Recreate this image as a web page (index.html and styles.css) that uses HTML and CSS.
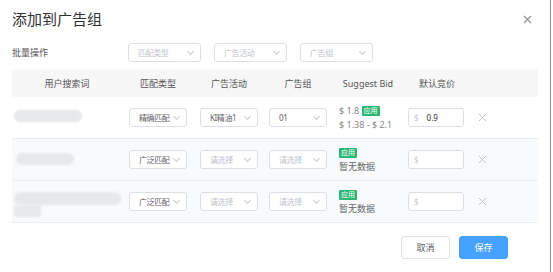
FILE: index.html
```html
<!DOCTYPE html>
<html lang="zh-CN">
<head>
  <meta charset="UTF-8">
  <title>添加到广告组</title>
  <link rel="stylesheet" href="styles.css">
</head>
<body>

  <div class="dialog">
    <div class="dialog-header">
      <span class="dialog-title">添加到广告组</span>
      <svg class="dialog-close" width="9" height="9" viewBox="0 0 9 9"><path d="M1 1L8 8M8 1L1 8" stroke="#909399" stroke-width="1.2"/></svg>
    </div>

    <div class="batch-row">
      <span class="batch-label">批量操作</span>
      <div class="select batch-select placeholder">匹配类型<i class="arrow"></i></div>
      <div class="select batch-select placeholder">广告活动<i class="arrow"></i></div>
      <div class="select batch-select placeholder">广告组<i class="arrow"></i></div>
    </div>

    <div class="grid">
      <div class="row head">
        <div class="cell first"><span>用户搜索词</span></div>
        <div class="cell"><span class="head-text">匹配类型</span></div>
        <div class="cell"><span class="head-text">广告活动</span></div>
        <div class="cell"><span class="head-text">广告组</span></div>
        <div class="cell"><span class="head-text">Suggest Bid</span></div>
        <div class="cell"><span class="head-text">默认竞价</span></div>
        <div class="cell"></div>
      </div>

      <div class="row">
        <div class="cell first"><div class="blur blur-a"></div></div>
        <div class="cell"><div class="select">精确匹配<i class="arrow"></i></div></div>
        <div class="cell"><div class="select">KI精油1<i class="arrow"></i></div></div>
        <div class="cell"><div class="select">01<i class="arrow"></i></div></div>
        <div class="cell bid">
          <div>$ 1.8 <span class="tag">应用</span></div>
          <div>$ 1.38 - $ 2.1</div>
        </div>
        <div class="cell"><div class="price"><span class="currency">$</span>0.9</div></div>
        <div class="cell"><svg class="remove" width="9" height="9" viewBox="0 0 9 9"><path d="M1 1L8 8M8 1L1 8" stroke="#c0c4cc" stroke-width="1"/></svg></div>
      </div>

      <div class="row shaded">
        <div class="cell first"><div class="blur blur-b"></div></div>
        <div class="cell"><div class="select">广泛匹配<i class="arrow"></i></div></div>
        <div class="cell"><div class="select placeholder">请选择<i class="arrow"></i></div></div>
        <div class="cell"><div class="select placeholder">请选择<i class="arrow"></i></div></div>
        <div class="cell bid">
          <div><span class="tag">应用</span></div>
          <div class="empty">暂无数据</div>
        </div>
        <div class="cell"><div class="price"><span class="currency">$</span></div></div>
        <div class="cell"><svg class="remove" width="9" height="9" viewBox="0 0 9 9"><path d="M1 1L8 8M8 1L1 8" stroke="#c0c4cc" stroke-width="1"/></svg></div>
      </div>

      <div class="row shaded">
        <div class="cell first">
          <div class="blur-stack">
            <div class="blur blur-c"></div>
            <div class="blur blur-d"></div>
          </div>
        </div>
        <div class="cell"><div class="select">广泛匹配<i class="arrow"></i></div></div>
        <div class="cell"><div class="select placeholder">请选择<i class="arrow"></i></div></div>
        <div class="cell"><div class="select placeholder">请选择<i class="arrow"></i></div></div>
        <div class="cell bid">
          <div><span class="tag">应用</span></div>
          <div class="empty">暂无数据</div>
        </div>
        <div class="cell"><div class="price"><span class="currency">$</span></div></div>
        <div class="cell"><svg class="remove" width="9" height="9" viewBox="0 0 9 9"><path d="M1 1L8 8M8 1L1 8" stroke="#c0c4cc" stroke-width="1"/></svg></div>
      </div>
    </div>

    <div class="dialog-footer">
      <button class="btn">取消</button>
      <button class="btn primary">保存</button>
    </div>
  </div>

</body>
</html>
```

FILE: styles.css
```css
body {
  margin: 0;
  padding: 0;
  background: #fff;
  font-family: "Noto Sans", "Noto Sans CJK SC", sans-serif;
  color: #606266;
}

.dialog {
  width: 551px;
  height: 272px;
  border-right: 1px solid #8c8c8c;
  box-sizing: border-box;
  padding: 0 12px;
}

.dialog-header {
  display: flex;
  justify-content: space-between;
  align-items: center;
  padding-top: 8px;
  height: 22px;
}

.dialog-title {
  font-size: 15px;
  line-height: 22px;
  color: #303133;
}

.dialog-close {
  margin-right: 6px;
}

.batch-row {
  display: flex;
  align-items: center;
  margin-top: 13px;
  height: 19px;
}

.batch-label {
  font-size: 9px;
  color: #555;
  width: 116px;
}

.select {
  position: relative;
  box-sizing: border-box;
  height: 19px;
  width: 58px;
  border: 1px solid #dcdfe6;
  border-radius: 3px;
  background: #fff;
  font-size: 8px;
  letter-spacing: -0.4px;
  line-height: 17px;
  padding-left: 9px;
  color: #606266;
  white-space: nowrap;
}

.batch-select {
  width: 73px;
  margin-right: 13px;
}

.placeholder {
  color: #c0c4cc;
}

.arrow {
  position: absolute;
  right: 7px;
  top: 5px;
  width: 4px;
  height: 4px;
  border-right: 1px solid #c8ccd3;
  border-bottom: 1px solid #c8ccd3;
  transform: rotate(45deg);
}

.grid {
  margin-top: 7px;
}

.row {
  display: grid;
  grid-template-columns: 110px 71px 69px 70px 69px 70px 68px;
  height: 42px;
  border-bottom: 1px solid #ebeef5;
  box-sizing: border-box;
}

.row.head {
  height: 28px;
  background: #f7f7f7;
  border-bottom: none;
  font-size: 9px;
  color: #555;
}

.row.shaded {
  background: #f9fafc;
}

.cell {
  display: flex;
  flex-direction: column;
  justify-content: center;
  padding-left: 7px;
}

.cell.first {
  padding-left: 2px;
}

.head .cell.first {
  align-items: center;
  padding-left: 0;
}

.head-text {
  display: block;
  width: 58px;
  text-align: center;
  white-space: nowrap;
}

.bid {
  font-size: 9px;
  line-height: 14px;
  color: #888;
  white-space: nowrap;
}

.bid .empty {
  color: #666;
}

.tag {
  display: inline-block;
  background: #2bb673;
  color: #fff;
  font-size: 7px;
  line-height: 10px;
  padding: 0 2px;
  border-radius: 1px;
  vertical-align: 1px;
}

.price {
  box-sizing: border-box;
  width: 56px;
  height: 19px;
  border: 1px solid #dcdfe6;
  border-radius: 3px;
  background: #fff;
  font-size: 8px;
  line-height: 17px;
  color: #303133;
  padding-left: 5px;
}

.currency {
  color: #c8ccd3;
  margin-right: 8px;
}

.blur {
  background: #e6e8eb;
  filter: blur(1px);
  border-radius: 6px;
}

.blur-a {
  width: 68px;
  height: 12px;
  margin-top: -3px;
}

.blur-b {
  width: 58px;
  height: 12px;
  margin-left: 2px;
  margin-top: -2px;
}

.blur-stack {
  display: flex;
  flex-direction: column;
}

.blur-c {
  width: 107px;
  height: 13px;
  margin-top: 6px;
}

.blur-d {
  width: 27px;
  height: 12px;
  border-radius: 0 0 3px 3px;
}

.dialog-footer {
  display: flex;
  justify-content: flex-end;
  gap: 9px;
  margin-top: 13px;
  padding-right: 30px;
}

.btn {
  width: 49px;
  height: 23px;
  font-family: "Noto Sans", "Noto Sans CJK SC", sans-serif;
  font-size: 9px;
  border: 1px solid #dcdfe6;
  border-radius: 3px;
  background: #fff;
  color: #606266;
  padding: 0;
}

.btn.primary {
  background: #47a2ff;
  border-color: #47a2ff;
  color: #fff;
}
```
